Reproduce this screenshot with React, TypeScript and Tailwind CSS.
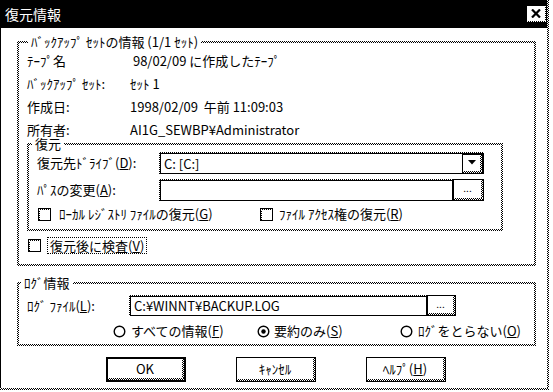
import React from "react";

const D =
  "bg-[image:repeating-conic-gradient(#000_0%_25%,#fff_0%_50%)] bg-[length:2px_2px]";

function Group({
  label,
  labelClass,
  className,
  children,
}: {
  label: React.ReactNode;
  labelClass: string;
  className: string;
  children: React.ReactNode;
}) {
  return (
    <div className={`relative p-[2px] shrink-0 ${D} ${className}`}>
      <div className="bg-white w-full h-full flex flex-col">{children}</div>
      <span
        className={`absolute top-[-6px] bg-white px-[3px] leading-[14px] whitespace-nowrap ${labelClass}`}
      >
        {label}
      </span>
    </div>
  );
}

function Check() {
  return (
    <span className="w-[13px] h-[13px] border border-black flex flex-col shrink-0 bg-white">
      <span className={`h-[1px] w-full ${D}`} />
      <span className="flex flex-1">
        <span className={`w-[1px] h-full ${D}`} />
        <span className="flex-1 bg-white" />
      </span>
    </span>
  );
}

function Radio({ on }: { on?: boolean }) {
  return (
    <svg width="13" height="13" viewBox="0 0 13 13" className="shrink-0">
      <circle cx="6.5" cy="6.5" r="5.3" fill="white" stroke="black" strokeWidth="1.4" />
      {on && <circle cx="6.5" cy="6.5" r="2.2" fill="black" />}
    </svg>
  );
}

function Edit({
  className,
  children,
}: {
  className: string;
  children?: React.ReactNode;
}) {
  return (
    <div className={`pt-[1px] pl-[1px] flex shrink-0 ${D} ${className}`}>
      <div className="flex-1 border border-black bg-white flex items-center pl-[3px] whitespace-nowrap">
        {children}
      </div>
    </div>
  );
}

function Btn({
  className,
  inner,
  children,
}: {
  className: string;
  inner?: string;
  children?: React.ReactNode;
}) {
  return (
    <div className={`border-black bg-white flex flex-col shrink-0 ${className}`}>
      <div className="flex flex-1">
        <div className={`flex-1 flex items-center justify-center whitespace-nowrap ${inner ?? ""}`}>
          {children}
        </div>
        <div className={`w-[2px] ${D}`} />
      </div>
      <div className={`h-[2px] ${D}`} />
    </div>
  );
}

function InfoRow({ label, value }: { label: string; value: string }) {
  return (
    <div className="h-[23px] flex items-center">
      <span className="w-[103px] shrink-0">{label}</span>
      <span className="whitespace-pre">{value}</span>
    </div>
  );
}

export default function App() {
  return (
    <div className="w-[553px] h-[392px] bg-white text-black text-[13px] leading-[14px] overflow-hidden font-['Noto_Sans_CJK_JP','Noto_Sans',sans-serif]">
      <div className="flex w-[549px]">
        <div className="w-[547px] h-[388px] flex flex-col">
          {/* Title bar */}
          <div className="h-[28px] bg-black flex items-center justify-between pl-[5px] pr-[1px] shrink-0">
            <span className="text-white text-[14px] leading-[16px]">復元情報</span>
            <div className="w-[19px] h-[16px] bg-white flex flex-col">
              <div className="flex flex-1">
                <div className="flex-1 flex items-center justify-center">
                  <svg width="10" height="9" viewBox="0 0 10 9">
                    <path d="M1 0.5 L9 8.5 M9 0.5 L1 8.5" stroke="black" strokeWidth="2.2" />
                  </svg>
                </div>
                <div className={`w-[1px] ${D}`} />
              </div>
              <div className={`h-[1px] ${D}`} />
            </div>
          </div>

          {/* Body */}
          <div className="flex-1 border-l border-black pl-[16px] pt-[13px] flex flex-col">
            <Group
              label="ﾊﾞｯｸｱｯﾌﾟ ｾｯﾄの情報 (1/1 ｾｯﾄ)"
              labelClass="left-[11px]"
              className="w-[519px] h-[225px]"
            >
              <div className="pl-[8px] pt-[6px] flex flex-col">
                <InfoRow label="ﾃｰﾌﾟ名" value=" 98/02/09 に作成したﾃｰﾌﾟ" />
                <InfoRow label="ﾊﾞｯｸｱｯﾌﾟ ｾｯﾄ:" value="ｾｯﾄ 1" />
                <InfoRow label="作成日:" value="1998/02/09  午前 11:09:03" />
                <InfoRow label="所有者:" value="AI1G_SEWBP¥Administrator" />

                <Group label="復元" labelClass="left-[5px]" className="w-[476px] h-[88px] mt-[2px]">
                  <div className="pl-[8px] pt-[7px] flex flex-col">
                    <div className="h-[22px] flex items-center">
                      <span className="w-[122px] shrink-0">
                        復元先ﾄﾞﾗｲﾌﾞ(<u>D</u>):
                      </span>
                      <Edit className="w-[325px] h-[22px]">
                        <div className="flex-1">C: [C:]</div>
                        <Btn className="border w-[21px] h-[20px]">
                          <svg width="8" height="5" viewBox="0 0 8 5">
                            <path d="M0 0 H8 L4 4.5 Z" fill="black" />
                          </svg>
                        </Btn>
                      </Edit>
                    </div>
                    <div className="h-[22px] flex items-center mt-[5px]">
                      <span className="w-[122px] shrink-0">
                        ﾊﾟｽの変更(<u>A</u>):
                      </span>
                      <Edit className="w-[294px] h-[22px]" />
                      <Btn className="border w-[31px] h-[22px]" inner="text-[10px] leading-[10px] pb-[2px]">
                        ...
                      </Btn>
                    </div>
                    <div className="h-[16px] flex items-center mt-[5px]">
                      <div className="w-[222px] flex items-center shrink-0">
                        <span className="ml-[1px]">
                          <Check />
                        </span>
                        <span className="ml-[8px] whitespace-nowrap">
                          ﾛｰｶﾙ ﾚｼﾞｽﾄﾘ ﾌｧｲﾙの復元(<u>G</u>)
                        </span>
                      </div>
                      <div className="flex items-center">
                        <span className="ml-[1px]">
                          <Check />
                        </span>
                        <span className="ml-[6px] whitespace-nowrap">
                          ﾌｧｲﾙ ｱｸｾｽ権の復元(<u>R</u>)
                        </span>
                      </div>
                    </div>
                  </div>
                </Group>

                <div className="h-[17px] flex items-center mt-[6px]">
                  <span className="ml-[1px]">
                    <Check />
                  </span>
                  <span className="ml-[6px] border border-dotted border-black px-[2px] h-[17px] flex items-center whitespace-nowrap">
                    復元後に検査(<u>V</u>)
                  </span>
                </div>
              </div>
            </Group>

            <Group label="ﾛｸﾞ情報" labelClass="left-[4px]" className="w-[519px] h-[64px] mt-[16px]">
              <div className="pl-[8px] pt-[11px] flex flex-col">
                <div className="h-[21px] flex items-center">
                  <span className="w-[102px] shrink-0">
                    ﾛｸﾞ ﾌｧｲﾙ(<u>L</u>):
                  </span>
                  <Edit className="w-[298px] h-[21px]">C:¥WINNT¥BACKUP.LOG</Edit>
                  <Btn className="border w-[29px] h-[21px]" inner="text-[10px] leading-[10px] pb-[2px]">
                    ...
                  </Btn>
                </div>
                <div className="h-[14px] flex items-center mt-[8px] pl-[86px]">
                  <div className="w-[144px] flex items-center shrink-0">
                    <Radio />
                    <span className="ml-[5px] whitespace-nowrap">
                      すべての情報(<u>F</u>)
                    </span>
                  </div>
                  <div className="w-[143px] flex items-center shrink-0">
                    <Radio on />
                    <span className="ml-[4px] whitespace-nowrap">
                      要約のみ(<u>S</u>)
                    </span>
                  </div>
                  <div className="flex items-center">
                    <Radio />
                    <span className="ml-[5px] whitespace-nowrap">
                      ﾛｸﾞをとらない(<u>O</u>)
                    </span>
                  </div>
                </div>
              </div>
            </Group>

            <div className="flex mt-[11px] pl-[89px] gap-[50px]">
              <Btn className="border-2 w-[80px] h-[25px]">OK</Btn>
              <Btn className="border w-[80px] h-[25px]">ｷｬﾝｾﾙ</Btn>
              <Btn className="border w-[80px] h-[25px]">
                ﾍﾙﾌﾟ(<u>H</u>)
              </Btn>
            </div>
          </div>
        </div>
        <div className={`w-[2px] h-[388px] ${D}`} />
      </div>
      <div className={`w-[549px] h-[2px] ${D}`} />
    </div>
  );
}
